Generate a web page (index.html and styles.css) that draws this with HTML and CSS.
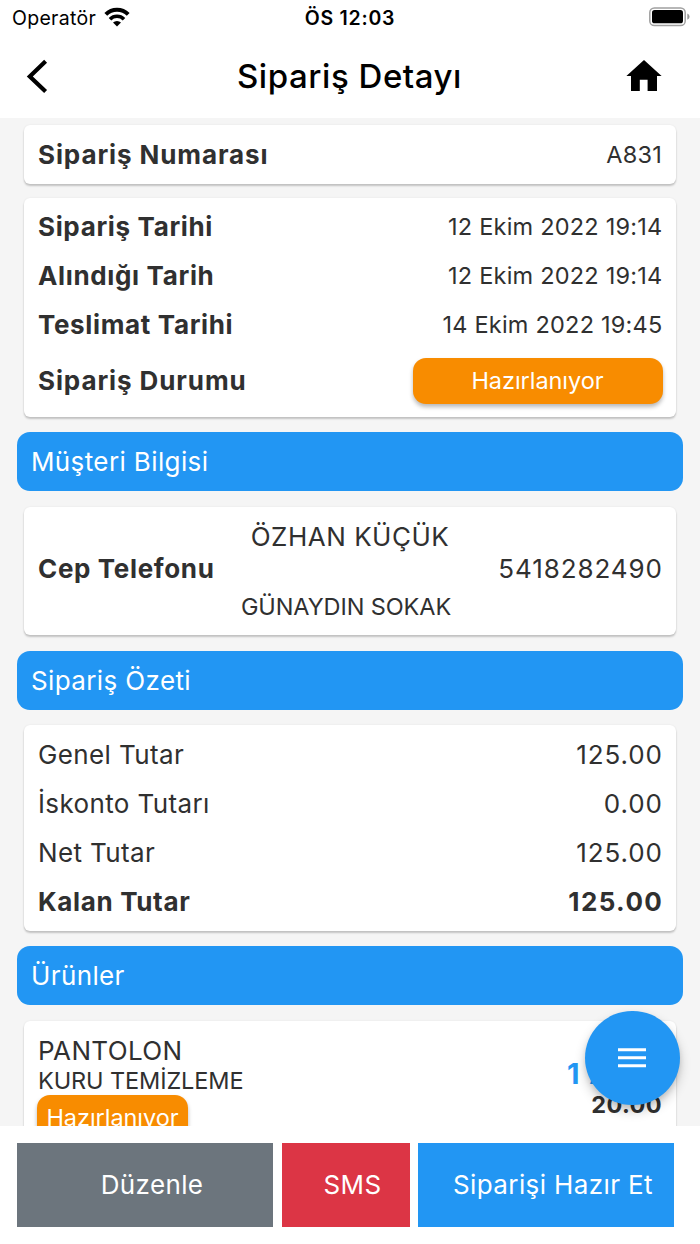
FILE: index.html
```html
<!DOCTYPE html>
<html lang="tr">
<head>
<meta charset="utf-8">
<title>Sipariş Detayı</title>
<link rel="stylesheet" href="styles.css">
</head>
<body>
<div class="app">
  <div class="status">
    <div class="carrier"><span>Operatör</span>
      <svg width="26" height="20" viewBox="0 0 26 20"><g fill="none" stroke="#000" stroke-width="4"><path d="M1.8 7.3a15.8 15.8 0 0 1 22.4 0"/><path d="M6 12.2a9.9 9.9 0 0 1 14 0" stroke-width="3.6"/></g><path d="M13 19.4l-4-3.8a5.6 5.6 0 0 1 8 0z"/></svg>
    </div>
    <span class="clock">ÖS 12:03</span>
    <svg class="battery" width="42" height="20" viewBox="0 0 42 20"><rect x=".8" y=".9" width="35.4" height="17.6" rx="4.6" fill="none" stroke="#a0a0a0" stroke-width="1.5"/><rect x="3" y="3.1" width="31" height="13.2" rx="2.6"/><path d="M38.3 6.6q2.3 1 2.3 3.1t-2.3 3.1z" fill="#999"/></svg>
  </div>
  <header class="header">
    <svg width="36" height="36" viewBox="0 0 36 36"><path d="M25.6 3.2 9.8 18.4 25.6 33.6" fill="none" stroke="#000" stroke-width="4.2"/></svg>
    <h1>Sipariş Detayı</h1>
    <svg class="home" width="36" height="32" viewBox="0 0 36 32"><path d="M18 0 35.6 16H31v15H21.6V19.8h-7.8V31H5V16H.4z"/></svg>
  </header>
  <main class="content">
    <section class="card">
      <div class="row"><b class="wide">Sipariş Numarası</b><span class="small">A831</span></div>
    </section>
    <section class="card dates">
      <div class="row"><b>Sipariş Tarihi</b><span class="small">12 Ekim 2022 19:14</span></div>
      <div class="row"><b>Alındığı Tarih</b><span class="small">12 Ekim 2022 19:14</span></div>
      <div class="row"><b>Teslimat Tarihi</b><span class="small">14 Ekim 2022 19:45</span></div>
      <div class="row row-status"><b class="wide">Sipariş Durumu</b><span class="badge">Hazırlanıyor</span></div>
    </section>
    <h2 class="bar">Müşteri Bilgisi</h2>
    <section class="card customer">
      <div class="name">ÖZHAN KÜÇÜK</div>
      <div class="row phone"><b>Cep Telefonu</b><span class="num">5418282490</span></div>
      <div class="address">GÜNAYDIN SOKAK</div>
    </section>
    <h2 class="bar">Sipariş Özeti</h2>
    <section class="card totals">
      <div class="row"><span>Genel Tutar</span><span class="num">125.00</span></div>
      <div class="row"><span>İskonto Tutarı</span><span class="num">0.00</span></div>
      <div class="row"><span>Net Tutar</span><span class="num">125.00</span></div>
      <div class="row"><b>Kalan Tutar</b><b class="total">125.00</b></div>
    </section>
    <h2 class="bar">Ürünler</h2>
    <section class="card product">
      <div>
        <div class="item">PANTOLON</div>
        <div class="service">KURU TEMİZLEME</div>
        <span class="badge badge-small">Hazırlanıyor</span>
      </div>
      <div class="amount"><div class="qty">1 Adet</div><div class="price">20.00</div></div>
    </section>
  </main>
  <footer class="footer">
    <button class="edit">Düzenle</button>
    <button class="sms">SMS</button>
    <button class="ready">Siparişi Hazır Et</button>
  </footer>
  <button class="fab" aria-label="Menü"><svg width="28" height="20" viewBox="0 0 28 20"><path d="M0 1.8h28M0 9.8h28M0 17.7h28" stroke="#fff" stroke-width="3"/></svg></button>
</div>
</body>
</html>
```
FILE: styles.css
```css
* { box-sizing: border-box; }
body { margin: 0; background: #fff; color: #303030; font: 26px/32px Inter, "Noto Sans", sans-serif; letter-spacing: .38px; }
.app { position: relative; width: 700px; height: 1244px; overflow: hidden; display: flex; flex-direction: column; }
.status { height: 36px; flex: none; display: grid; grid-template-columns: 1fr auto 1fr; align-items: center; padding: 0 10px 0 12px; color: #000; font-size: 19.5px; letter-spacing: .3px; }
.carrier { display: flex; align-items: center; gap: 8px; }
.carrier svg { margin-top: -3px; }
.clock { font-weight: 600; letter-spacing: .75px; margin-right: 2px; }
.battery { justify-self: end; margin: -2px -1px 0 0; }
.header { height: 82px; flex: none; display: grid; grid-template-columns: 1fr auto 1fr; align-items: center; padding: 0 38px 2px 20px; color: #000; }
.header h1 { margin: 0 -17px 0 0; font-size: 33px; line-height: 40px; font-weight: 450; letter-spacing: .55px; }
.home { justify-self: end; }
.content { height: 1007.5px; flex: none; overflow: hidden; background: #f5f5f5; padding: 7.3px 17px 0; }
.card { margin: 0 7px 13.5px; padding: 5px 14px; background: #fff; border-radius: 6px; box-shadow: 0 2px 2px rgba(0,0,0,.2), 0 0 2px rgba(0,0,0,.08); }
.dates { padding: 4.9px 13.5px 5.6px 14px; }
.row { height: 49px; display: flex; align-items: center; justify-content: space-between; }
.row-status { height: 62px; }
b { font-weight: 700; letter-spacing: .65px; }
.wide { letter-spacing: .9px; }
.small { font-size: 23.5px; letter-spacing: .22px; }
.num { letter-spacing: .92px; margin-right: -.9px; }
.total { letter-spacing: 1.4px; margin-right: -1.3px; }
.badge { display: block; width: 250px; height: 46px; line-height: 45px; border-radius: 13px; background: #f88c00; color: #fff; text-align: center; font-size: 23.5px; letter-spacing: -.05px; box-shadow: 0 3px 4px rgba(0,0,0,.28); }
.bar { margin: 15.2px 0; height: 59px; padding: 0 14px; border-radius: 13px; background: #2296f3; color: #fff; font-size: 26px; font-weight: 400; line-height: 59px; }
.customer { height: 128.7px; padding-top: 14px; text-align: center; }
.name { letter-spacing: .5px; }
.phone { height: 32px; }
.address { font-size: 23.5px; margin: 6px 8px 0 0; letter-spacing: -.1px; }
.totals { padding: 5.8px 14px 4.7px; }
.product { display: flex; justify-content: space-between; height: 150px; padding-top: 14px; }
.service { font-size: 23.5px; line-height: 28px; letter-spacing: -.1px; }
.badge-small { width: 151px; margin: 0 0 0 -1px; }
.amount { text-align: right; font-weight: 700; padding-top: 22.5px; }
.qty { color: #2296f3; font-size: 29px; line-height: 34px; letter-spacing: 1.4px; }
.price { font-size: 23.5px; line-height: 28px; }
.footer { flex: 1; display: grid; grid-template-columns: 256px 128px 256px; gap: 8.5px; padding: 17px; }
.footer button { height: 84.5px; border: 0; padding: 0 14px 0 28px; color: #fff; font: inherit; letter-spacing: inherit; white-space: nowrap; }
.edit { background: #6c757d; }
.sms { background: #dc3545; }
.ready { background: #2296f3; }
.fab { position: absolute; left: 585px; top: 1010.5px; width: 94.5px; height: 94.5px; padding: 0; border: 0; border-radius: 50%; background: #2296f3; display: grid; place-items: center; box-shadow: 0 6px 12px rgba(0,0,0,.2), 0 3px 5px rgba(0,0,0,.1); }
```
